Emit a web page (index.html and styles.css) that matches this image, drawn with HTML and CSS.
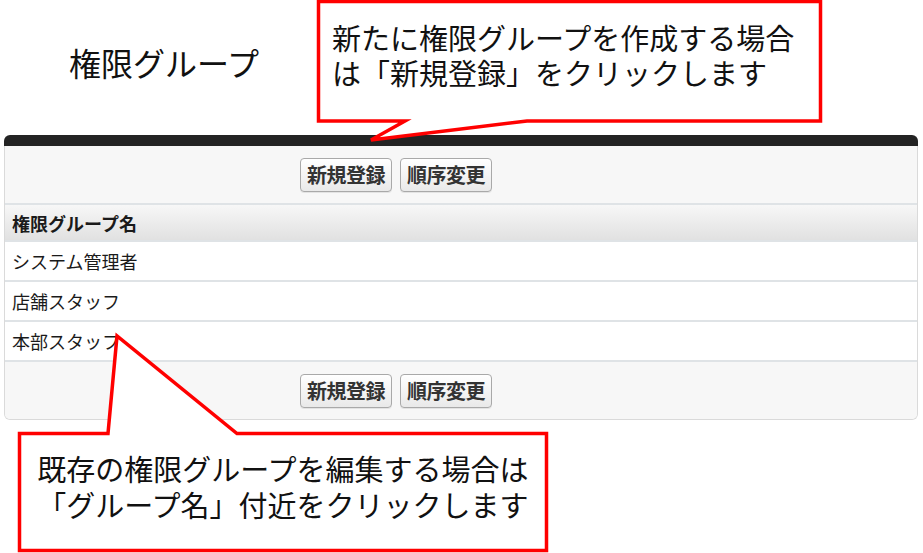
FILE: index.html
```html
<!DOCTYPE html>
<html lang="ja">
<head>
<meta charset="utf-8">
<title>権限グループ</title>
<link rel="stylesheet" href="styles.css">
</head>
<body>
<div class="page">
  <header class="title-area">
    <h1 class="page-title">権限グループ</h1>
  </header>

  <section class="panel">
    <div class="panel-top"></div>
    <div class="panel-body">
      <div class="btn-row">
        <button class="btn">新規登録</button>
        <button class="btn">順序変更</button>
      </div>
      <div class="list">
        <div class="list-head">権限グループ名</div>
        <div class="list-row">システム管理者</div>
        <div class="list-row">店舗スタッフ</div>
        <div class="list-row">本部スタッフ</div>
      </div>
      <div class="btn-row btn-row-bottom">
        <button class="btn">新規登録</button>
        <button class="btn">順序変更</button>
      </div>
    </div>
  </section>

  <svg class="callout-shapes" width="923" height="553" viewBox="0 0 923 553" xmlns="http://www.w3.org/2000/svg">
    <path d="M318.5,1.5 H820.5 V121 H527 L371,140 L405,121 H318.5 Z" fill="#ffffff" stroke="#ff0000" stroke-width="3.5" stroke-linejoin="miter"/>
    <path d="M19.5,433.5 H108 L117,336 L237,433.5 H546.5 V550.5 H19.5 Z" fill="#ffffff" stroke="#ff0000" stroke-width="3.5" stroke-linejoin="miter"/>
  </svg>

  <div class="callout callout-top"><span class="callout-line">新たに権限グループを作成する場合</span><span class="callout-line">は「新規登録」をクリックします</span></div>
  <div class="callout callout-bottom"><span class="callout-line">既存の権限グループを編集する場合は</span><span class="callout-line">「グループ名」付近をクリックします</span></div>
</div>
</body>
</html>
```

FILE: styles.css
```css
html, body {
  margin: 0;
  padding: 0;
  background: #ffffff;
}

body {
  font-family: "Noto Sans CJK JP", "Noto Sans", sans-serif;
  color: #111;
}

.page {
  position: relative;
  width: 923px;
  height: 553px;
  overflow: hidden;
}

.title-area {
  height: 135px;
  box-sizing: border-box;
  padding: 42px 0 0 69px;
}

.page-title {
  margin: 0;
  font-size: 32px;
  line-height: 40px;
  font-weight: 400;
  color: #111;
}

.panel {
  margin-left: 4px;
  width: 914px;
  border-radius: 6px 6px 0 0;
}

.panel-top {
  height: 11px;
  background: #232323;
  border-radius: 6px 6px 0 0;
}

.panel-body {
  border: 1px solid #dadada;
  border-top: 0;
  border-radius: 0 0 6px 6px;
  background: #f7f7f7;
  overflow: hidden;
}

.btn-row {
  height: 57px;
  display: flex;
  align-items: center;
  gap: 8px;
  padding-left: 295px;
  background: #f7f7f7;
}

.btn-row-bottom {
  height: 57px;
}

.btn {
  height: 34px;
  width: 92px;
  padding: 0;
  margin: 0;
  border: 1px solid #a9a9a9;
  border-radius: 4px;
  background: linear-gradient(#ffffff, #e9e9e9);
  box-shadow: 0 1px 0 rgba(0,0,0,0.08);
  font-family: "Noto Sans CJK JP", sans-serif;
  font-size: 20px;
  font-weight: 700;
  color: #333;
  line-height: 32px;
  letter-spacing: -0.5px;
}

.list {
  background: #ffffff;
}

.list-head,
.list-row {
  display: flex;
  align-items: center;
  padding-left: 7px;
  font-size: 18px;
  color: #1a1a1a;
  border-bottom: 2px solid #dfe3e6;
}

.list-head {
  height: 35px;
  border-top: 2px solid #dfe3e6;
  font-weight: 700;
  background: linear-gradient(#f7f7f7, #e1e1e1);
}

.list-row {
  height: 38px;
  background: #ffffff;
}

.callout-shapes {
  position: absolute;
  left: 0;
  top: 0;
  pointer-events: none;
}

.callout {
  position: absolute;
  font-family: "Liberation Sans", "Noto Sans CJK JP", sans-serif;
  font-size: 29px;
  color: #111;
  white-space: nowrap;
}

.callout-line {
  display: block;
}

.callout-top {
  left: 332px;
  top: 23px;
  line-height: 35px;
}

.callout-bottom {
  left: 18px;
  width: 530px;
  top: 453px;
  line-height: 36px;
  text-align: center;
}
```
